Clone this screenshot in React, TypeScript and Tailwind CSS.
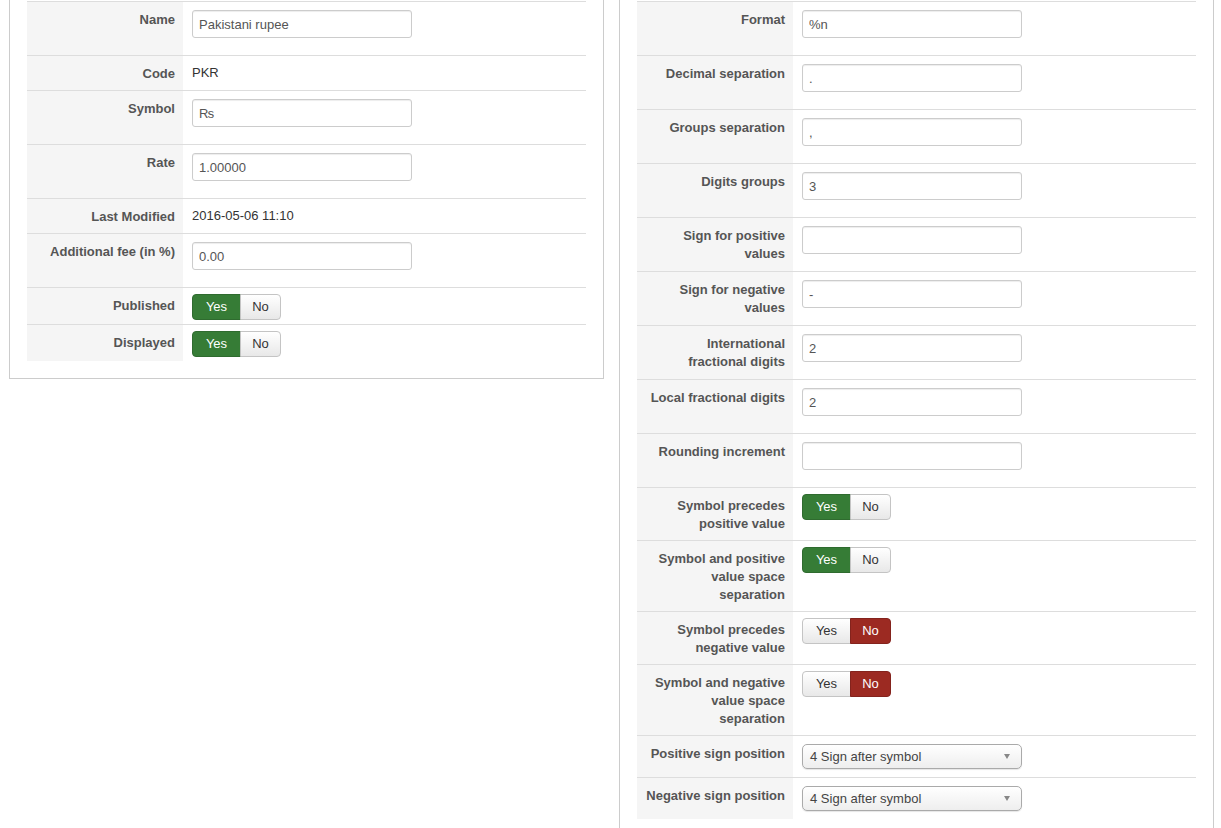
type Field =
  | { kind: "input"; label: string[]; value: string }
  | { kind: "text"; label: string[]; value: string }
  | { kind: "toggle"; label: string[]; on: boolean }
  | { kind: "select"; label: string[]; value: string };

const leftFields: Field[] = [
  { kind: "input", label: ["Name"], value: "Pakistani rupee" },
  { kind: "text", label: ["Code"], value: "PKR" },
  { kind: "input", label: ["Symbol"], value: "₨" },
  { kind: "input", label: ["Rate"], value: "1.00000" },
  { kind: "text", label: ["Last Modified"], value: "2016-05-06 11:10" },
  { kind: "input", label: ["Additional fee (in %)"], value: "0.00" },
  { kind: "toggle", label: ["Published"], on: true },
  { kind: "toggle", label: ["Displayed"], on: true },
];

const rightFields: Field[] = [
  { kind: "input", label: ["Format"], value: "%n" },
  { kind: "input", label: ["Decimal separation"], value: "." },
  { kind: "input", label: ["Groups separation"], value: "," },
  { kind: "input", label: ["Digits groups"], value: "3" },
  { kind: "input", label: ["Sign for positive", "values"], value: "" },
  { kind: "input", label: ["Sign for negative", "values"], value: "-" },
  { kind: "input", label: ["International", "fractional digits"], value: "2" },
  { kind: "input", label: ["Local fractional digits"], value: "2" },
  { kind: "input", label: ["Rounding increment"], value: "" },
  { kind: "toggle", label: ["Symbol precedes", "positive value"], on: true },
  { kind: "toggle", label: ["Symbol and positive", "value space", "separation"], on: true },
  { kind: "toggle", label: ["Symbol precedes", "negative value"], on: false },
  { kind: "toggle", label: ["Symbol and negative", "value space", "separation"], on: false },
  { kind: "select", label: ["Positive sign position"], value: "4 Sign after symbol" },
  { kind: "select", label: ["Negative sign position"], value: "4 Sign after symbol" },
];

function YesNo({ on }: { on: boolean }) {
  const idle =
    "border border-[#c4c4c4] bg-gradient-to-b from-white to-[#e8e8e8] text-[#333]";
  return (
    <div className="-mt-[2px] -mb-[4px] inline-flex h-[26px] text-[13px] leading-[24px]">
      <span
        className={
          "w-[49px] rounded-l-[4px] text-center " +
          (on ? "border border-[#2f6b2f] bg-[#367c36] text-white" : idle)
        }
      >
        Yes
      </span>
      <span
        className={
          "-ml-px w-[41px] rounded-r-[4px] text-center " +
          (!on ? "border border-[#84231d] bg-[#9c2a22] text-white" : idle)
        }
      >
        No
      </span>
    </div>
  );
}

function Value({ field }: { field: Field }) {
  switch (field.kind) {
    case "input":
      return (
        <input
          readOnly
          value={field.value}
          className="mb-[9px] block h-[28px] w-[220px] rounded-[3px] border border-[#ccc] bg-white px-[6px] py-[4px] text-[13px] leading-[18px] text-[#555] shadow-[inset_0_1px_1px_rgba(0,0,0,0.075)] outline-none"
        />
      );
    case "text":
      return <span className="text-[#333]">{field.value}</span>;
    case "toggle":
      return <YesNo on={field.on} />;
    case "select":
      return (
        <div className="flex h-[25px] w-[220px] items-center justify-between rounded-[5px] border border-[#aaa] bg-gradient-to-b from-white to-[#eee] pl-[7px] pr-[11px] text-[13px] text-[#444] shadow-[0_1px_1px_rgba(0,0,0,0.1)]">
          <span>{field.value}</span>
          <span className="h-0 w-0 border-x-[3.5px] border-t-[5px] border-x-transparent border-t-[#888]" />
        </div>
      );
  }
}

function FieldTable({ fields }: { fields: Field[] }) {
  return (
    <div>
      {fields.map((f, i) => (
        <div key={i} className="flex border-t border-[#ddd]">
          <div className="w-[156px] shrink-0 whitespace-nowrap bg-[#f5f5f5] pt-[9px] pb-[7px] pr-2 text-right font-bold text-[#555]">
            {f.label.map((l, j) => (
              <div key={j}>{l}</div>
            ))}
          </div>
          <div className="flex-1 py-2 pl-[9px]">
            <Value field={f} />
          </div>
        </div>
      ))}
    </div>
  );
}

export default function App() {
  return (
    <div className="flex min-h-screen w-[1221px] items-start gap-[15px] bg-white pl-[9px] font-['Liberation_Sans',Arial,sans-serif] text-[13px] leading-[18px]">
      <div className="w-[595px] border border-t-0 border-[#ccc] px-[17px] pt-px pb-[17px]">
        <FieldTable fields={leftFields} />
      </div>
      <div className="w-[595px] border border-t-0 border-[#ccc] px-[17px] pt-px pb-[17px]">
        <FieldTable fields={rightFields} />
      </div>
    </div>
  );
}
